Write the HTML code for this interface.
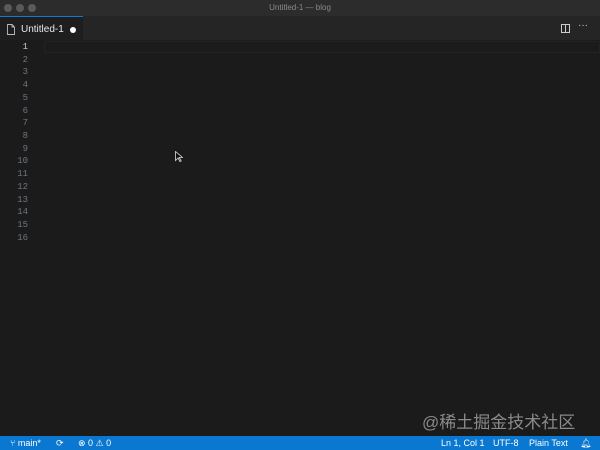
<!DOCTYPE html><html><head><style>
body{margin:0;width:600px;height:450px;background:#1e1e1e;font-family:"Liberation Sans",sans-serif;overflow:hidden;position:relative}
.title{position:absolute;top:0;left:0;width:600px;height:16px;background:#2c2c2c;color:#8a8a8a;font-size:8px;text-align:center;line-height:16px}
.dot{position:absolute;top:4px;width:8px;height:8px;border-radius:50%;background:#5a5a5a}
.tabbar{position:absolute;top:16px;left:0;width:600px;height:24px;background:#252526}
.tab{position:absolute;left:0;top:0;width:83px;height:24px;background:#1e1e1e;border-top:1px solid #0e7ad3;box-sizing:border-box;color:#e8e8e8;font-size:10px;line-height:26px}
.ed{position:absolute;top:40px;left:0;width:600px;height:396px;background:#1b1b1b}
.ln{position:absolute;left:0;width:28px;text-align:right;font-family:"Liberation Mono",monospace;font-size:9px;color:#6e7681}
.status{position:absolute;top:436px;left:0;width:600px;height:14px;background:#0a78d0;color:#fff;font-size:9px;line-height:14px}
.status span{position:absolute}
</style></head><body>
<div class="title">Untitled-1 — blog</div>
<div class="dot" style="left:4px"></div><div class="dot" style="left:16px"></div><div class="dot" style="left:28px"></div>
<div class="tabbar"><div class="tab">
<svg style="position:absolute;left:7px;top:7px" width="8" height="11" viewBox="0 0 8 11"><path d="M0.5 0.5h4.5l2.5 2.5v7.5h-7z M5 0.5v2.5h2.5" fill="none" stroke="#bbb" stroke-width="0.9"/></svg>
<span style="position:absolute;left:21px">Untitled-1</span>
<span style="position:absolute;left:70px;top:10px;width:6px;height:6px;border-radius:50%;background:#fff"></span></div>
<svg style="position:absolute;left:561px;top:8px" width="9" height="9"><rect x="0.5" y="0.5" width="8" height="8" fill="none" stroke="#ccc"/><line x1="4.5" y1="0" x2="4.5" y2="9" stroke="#ccc"/></svg>
<span style="position:absolute;left:578px;top:4px;color:#ccc;font-size:10px">···</span></div>
<div class="ed"><div style="position:absolute;left:44px;top:1px;width:556px;height:12px;border:1px solid #222;box-sizing:border-box"></div></div>
<div class="ln" style="top:42px;color:#ccc">1</div>
<div class="ln" style="top:55px">2</div><div class="ln" style="top:67px">3</div><div class="ln" style="top:80px">4</div><div class="ln" style="top:93px">5</div><div class="ln" style="top:106px">6</div><div class="ln" style="top:118px">7</div><div class="ln" style="top:131px">8</div><div class="ln" style="top:144px">9</div><div class="ln" style="top:156px">10</div><div class="ln" style="top:169px">11</div><div class="ln" style="top:182px">12</div><div class="ln" style="top:195px">13</div><div class="ln" style="top:207px">14</div><div class="ln" style="top:220px">15</div><div class="ln" style="top:233px">16</div>
<svg style="position:absolute;left:175px;top:151px" width="8" height="11"><path d="M0.5 0.5v9l2.5-2.5 2 3.5 1.2-0.6-2-3.4h3.3z" fill="#111" stroke="#ddd" stroke-width="0.8"/></svg>
<div style="position:absolute;left:422px;top:408px;font-size:17px;color:#8a8a8a;font-family:'Liberation Sans','Noto Sans CJK SC',sans-serif">@稀土掘金技术社区</div>
<div class="status">
<span style="left:10px">⑂ main*</span><span style="left:56px">⟳</span><span style="left:78px">⊗ 0 ⚠ 0</span>
<span style="left:441px">Ln 1, Col 1</span><span style="left:493px">UTF-8</span><span style="left:529px">Plain Text</span><span style="left:580px">🔔︎</span>
</div>
</body></html>
